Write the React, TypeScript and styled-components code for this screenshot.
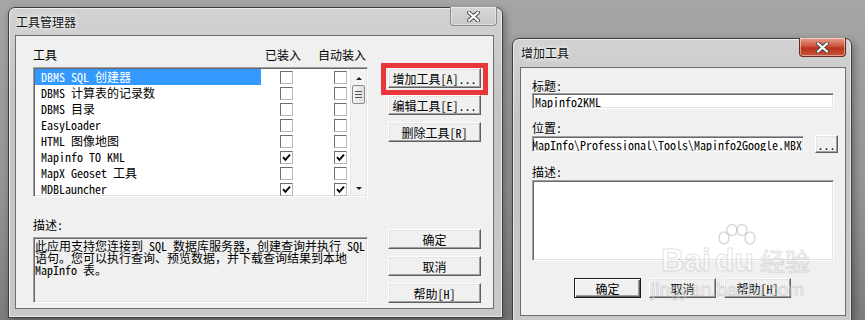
import React from "react";
import styled, { createGlobalStyle } from "styled-components";

const UI_FONT = `"Noto Sans Mono CJK SC", "Liberation Mono", "Noto Sans CJK SC", monospace`;

const GlobalStyle = createGlobalStyle`
  html, body {
    margin: 0;
    padding: 0;
  }
  body {
    width: 865px;
    height: 320px;
    overflow: hidden;
    background: linear-gradient(180deg, #a6a6a6 0%, #959595 60%, #7d7d7d 100%);
    font-family: ${UI_FONT};
    font-size: 12px;
    color: #000;
  }
`;

const Desktop = styled.div`
  position: relative;
  display: flex;
  align-items: flex-start;
  width: 865px;
  height: 320px;
  padding: 7px 0 0 8px;
  box-sizing: border-box;
  overflow: hidden;
`;

const Window = styled.div<{ $w: number; $h: number; $top?: number; $left?: number }>`
  display: flex;
  flex-direction: column;
  flex: none;
  width: ${({ $w }) => $w}px;
  height: ${({ $h }) => $h}px;
  margin-top: ${({ $top }) => $top || 0}px;
  margin-left: ${({ $left }) => $left || 0}px;
  box-sizing: border-box;
  border: 1px solid #3e3e3e;
  border-radius: 7px 7px 0 0;
  background: linear-gradient(180deg, #d2d2d2 0%, #c4c4c4 30%, #c8c8c8 100%);
  box-shadow: inset 0 0 0 1px rgba(255, 255, 255, 0.6), 2px 3px 9px rgba(0, 0, 0, 0.35);
`;

const TitleBar = styled.div<{ $h: number; $pl: number; $pr: number }>`
  display: flex;
  justify-content: space-between;
  align-items: flex-start;
  height: ${({ $h }) => $h}px;
  padding: 0 ${({ $pr }) => $pr}px 0 ${({ $pl }) => $pl}px;
  flex: none;
`;

const Title = styled.span`
  align-self: center;
  font-family: "Noto Sans CJK SC", sans-serif;
  font-size: 12px;
  line-height: 14px;
  color: #111;
  text-shadow: 0 0 6px #fff, 0 0 3px #fff;
`;

const CloseButton = styled.div<{ $active?: boolean }>`
  display: flex;
  align-items: center;
  justify-content: center;
  width: 47px;
  height: 19px;
  margin-top: -1px;
  box-sizing: border-box;
  border: 1px solid ${({ $active }) => ($active ? "#6b2a1f" : "#8a8a8a")};
  border-top: none;
  border-radius: 0 0 4px 4px;
  background: ${({ $active }) =>
    $active
      ? "linear-gradient(180deg, #e6a08f 0%, #d0553c 45%, #b8321c 55%, #c9543a 100%)"
      : "linear-gradient(180deg, #d6d6d6 0%, #c8c8c8 100%)"};
  box-shadow: inset 0 0 0 1px rgba(255, 255, 255, 0.45);
`;

const Client = styled.div<{ $mx: [number, number]; $mb: number }>`
  flex: 1;
  margin: 0 ${({ $mx }) => $mx[1]}px ${({ $mb }) => $mb}px ${({ $mx }) => $mx[0]}px;
  border: 1px solid #6d6d6d;
  background: #f0f0f0;
  box-sizing: border-box;
  overflow: hidden;
`;

/* ---------- manager dialog ---------- */

const ManagerGrid = styled.div`
  display: grid;
  grid-template-columns: 335px 93px;
  column-gap: 20px;
  padding: 12px 0 0 17px;
`;

const Column = styled.div<{ $mt?: number; $pt?: number; $gap?: number }>`
  display: flex;
  flex-direction: column;
  gap: ${({ $gap }) => $gap || 0}px;
  margin-top: ${({ $mt }) => $mt || 0}px;
  padding-top: ${({ $pt }) => $pt || 0}px;
`;

const Label = styled.div<{ $w?: number }>`
  line-height: 14px;
  height: 14px;
  white-space: nowrap;
  ${({ $w }) => ($w ? `width: ${$w}px; flex: none;` : "")}
`;

const HeaderRow = styled.div`
  display: flex;
`;

const Sunken = styled.div<{ $h: number; $bg?: string }>`
  position: relative;
  height: ${({ $h }) => $h}px;
  box-sizing: border-box;
  border: 1px solid;
  border-color: #a0a0a0 #fff #fff #a0a0a0;
  box-shadow: inset 1px 1px 0 #696969, inset -1px -1px 0 #e3e3e3;
  background: ${({ $bg }) => $bg || "#fff"};
  overflow: hidden;
`;

const ListBox = styled(Sunken)`
  display: flex;
  margin-top: 5px;
  padding: 1px;
`;

const Rows = styled.div`
  flex: 1;
  display: flex;
  flex-direction: column;
`;

const Row = styled.div`
  display: flex;
  align-items: center;
  height: 16px;
`;

const NameCell = styled.div<{ $selected?: boolean }>`
  width: 226px;
  height: 16px;
  line-height: 16px;
  padding-left: 6px;
  box-sizing: border-box;
  white-space: nowrap;
  background: ${({ $selected }) => ($selected ? "#3399ff" : "transparent")};
  color: ${({ $selected }) => ($selected ? "#fff" : "#000")};
`;

const CheckBox = styled.div<{ $ml: number }>`
  width: 13px;
  height: 13px;
  margin-left: ${({ $ml }) => $ml}px;
  box-sizing: border-box;
  border: 1px solid;
  border-color: #6e6e6e #b9b9b9 #b9b9b9 #6e6e6e;
  background: #fff;
  display: flex;
  align-items: center;
  justify-content: center;
`;

const ScrollBar = styled.div`
  position: relative;
  width: 15px;
  display: flex;
  flex-direction: column;
  align-items: center;
  background: #f3f3f3;
  border-left: 1px solid #e6e6e6;
`;

const ScrollArrow = styled.div<{ $down?: boolean }>`
  width: 0;
  height: 0;
  margin-top: ${({ $down }) => ($down ? "auto" : "8px")};
  margin-bottom: ${({ $down }) => ($down ? "5px" : "0")};
  border-left: 3.5px solid transparent;
  border-right: 3.5px solid transparent;
  ${({ $down }) => ($down ? "border-top: 3px solid #222;" : "border-bottom: 3px solid #222;")}
`;

const ScrollThumb = styled.div`
  width: 13px;
  height: 19px;
  margin-top: 5px;
  box-sizing: border-box;
  border: 1px solid #8c8c8c;
  border-radius: 2px;
  background: linear-gradient(90deg, #f6f6f6, #dedede);
  display: flex;
  flex-direction: column;
  align-items: center;
  justify-content: center;
  gap: 2px;
`;

const Grip = styled.span`
  width: 7px;
  height: 1px;
  background: #555;
`;

const DescBox = styled(Sunken)`
  margin-top: 5px;
  padding: 2px 1px;
  line-height: 12px;
  white-space: pre;
`;

const Button = styled.div<{ $w: number; $h?: number; $default?: boolean }>`
  display: flex;
  align-items: center;
  justify-content: center;
  width: ${({ $w }) => $w}px;
  height: ${({ $h }) => $h || 20}px;
  box-sizing: border-box;
  white-space: nowrap;
  background: #f0f0f0;
  border: 1px solid;
  border-color: ${({ $default }) => ($default ? "#1a1a1a" : "#fff #5e5e5e #5e5e5e #fff")};
  box-shadow: ${({ $default }) =>
    $default
      ? "inset 1px 1px 0 #fff, inset -1px -1px 0 #5e5e5e, inset -2px -2px 0 #a0a0a0"
      : "inset -1px -1px 0 #a0a0a0, inset 1px 1px 0 #e3e3e3"};
`;

const Highlight = styled.div`
  position: relative;

  &::after {
    content: "";
    position: absolute;
    left: -7px;
    right: -7px;
    top: -5px;
    bottom: -7px;
    border: 5px solid #e8363a;
    pointer-events: none;
  }
`;

/* ---------- add tool dialog ---------- */

const Form = styled.div`
  display: flex;
  flex-direction: column;
  padding: 11px 0 0 11px;
`;

const Field = styled(Sunken)`
  display: flex;
  align-items: center;
  justify-content: flex-end;
  padding: 0 1px 0 2px;
  white-space: nowrap;
`;

const FieldRow = styled.div`
  display: flex;
  align-items: center;
  gap: 11px;
`;

const Gap = styled.div<{ $h: number }>`
  height: ${({ $h }) => $h}px;
  flex: none;
`;

const ButtonRow = styled.div`
  display: flex;
  gap: 8px;
  padding-left: 42px;
`;

/* ---------- watermark over the screenshot ---------- */

const Watermark = styled.div`
  position: absolute;
  left: 661px;
  top: 244px;
  white-space: nowrap;
  font-family: "Liberation Sans", sans-serif;
  color: rgba(255, 255, 255, 0.4);
  -webkit-text-stroke: 1px rgba(150, 150, 150, 0.3);
  pointer-events: none;
`;

const MarkLine = styled.div`
  display: flex;
  align-items: baseline;
  font-size: 32px;
  font-weight: bold;
  line-height: 32px;
`;

const MarkDu = styled.span`
  margin-left: 4px;
`;

const MarkCn = styled.span`
  font-family: "Noto Sans CJK SC", sans-serif;
  font-size: 25px;
  font-weight: normal;
  margin-left: 6px;
`;

const MarkUrl = styled.div`
  font-size: 19px;
  line-height: 20px;
  margin: 4px 0 0 -10px;
`;

const PawMark = styled.svg`
  position: absolute;
  left: 56px;
  top: -20px;
`;

const tools = [
  { name: "DBMS SQL 创建器", loaded: false, auto: false },
  { name: "DBMS 计算表的记录数", loaded: false, auto: false },
  { name: "DBMS 目录", loaded: false, auto: false },
  { name: "EasyLoader", loaded: false, auto: false },
  { name: "HTML 图像地图", loaded: false, auto: false },
  { name: "Mapinfo TO KML", loaded: true, auto: true },
  { name: "MapX Geoset 工具", loaded: false, auto: false },
  { name: "MDBLauncher", loaded: true, auto: true },
];

const Check = ({ on, ml }: { on: boolean; ml: number }) => (
  <CheckBox $ml={ml}>
    {on && (
      <svg width="9" height="9" viewBox="0 0 9 9">
        <path d="M1 4.2 L3.4 6.8 L8 1.6" fill="none" stroke="#000" strokeWidth="1.9" />
      </svg>
    )}
  </CheckBox>
);

const CloseGlyph = () => (
  <svg width="13" height="11" viewBox="0 0 13 11">
    <path
      d="M2 1.5 L11 9.5 M11 1.5 L2 9.5"
      stroke="#4a4a4a"
      strokeWidth="4"
      strokeLinecap="round"
      fill="none"
    />
    <path
      d="M2 1.5 L11 9.5 M11 1.5 L2 9.5"
      stroke="#fff"
      strokeWidth="2.2"
      strokeLinecap="round"
      fill="none"
    />
  </svg>
);

const Paw = () => (
  <PawMark width="40" height="26" viewBox="0 0 40 26">
    <g fill="rgba(255,255,255,0.4)" stroke="rgba(150,150,150,0.35)" strokeWidth="1.5">
      <ellipse cx="7" cy="14" rx="5" ry="6" />
      <ellipse cx="15" cy="6" rx="5" ry="5.5" />
      <ellipse cx="25" cy="6" rx="5" ry="5.5" />
      <ellipse cx="33" cy="14" rx="5" ry="6" />
    </g>
  </PawMark>
);

export default function App() {
  return (
    <>
      <GlobalStyle />
      <Desktop>
        <Window $w={495} $h={311}>
          <TitleBar $h={27} $pl={7} $pr={5}>
            <Title>工具管理器</Title>
            <CloseButton>
              <CloseGlyph />
            </CloseButton>
          </TitleBar>
          <Client $mx={[6, 8]} $mb={8}>
            <ManagerGrid>
              <Column>
                <HeaderRow>
                  <Label $w={232}>工具</Label>
                  <Label $w={53}>已装入</Label>
                  <Label>自动装入</Label>
                </HeaderRow>
                <ListBox $h={130}>
                  <Rows>
                    {tools.map((t, i) => (
                      <Row key={t.name}>
                        <NameCell $selected={i === 0}>{t.name}</NameCell>
                        <Check on={t.loaded} ml={19} />
                        <Check on={t.auto} ml={41} />
                      </Row>
                    ))}
                  </Rows>
                  <ScrollBar>
                    <ScrollArrow />
                    <ScrollThumb>
                      <Grip />
                      <Grip />
                      <Grip />
                    </ScrollThumb>
                    <ScrollArrow $down />
                  </ScrollBar>
                </ListBox>
              </Column>
              <Column $pt={20} $gap={7}>
                <Highlight>
                  <Button $w={93}>增加工具[A]...</Button>
                </Highlight>
                <Button $w={93}>编辑工具[E]...</Button>
                <Button $w={93}>删除工具[R]</Button>
              </Column>
              <Column $mt={21}>
                <Label>描述:</Label>
                <DescBox $h={66} $bg="#f0f0f0">
                  {"此应用支持您连接到 SQL 数据库服务器，创建查询并执行 SQL\n语句。您可以执行查询、预览数据，并下载查询结果到本地\nMapInfo 表。"}
                </DescBox>
              </Column>
              <Column $mt={21} $pt={11} $gap={7}>
                <Button $w={93}>确定</Button>
                <Button $w={93}>取消</Button>
                <Button $w={93}>帮助[H]</Button>
              </Column>
            </ManagerGrid>
          </Client>
        </Window>

        <Window $w={340} $h={284} $top={31} $left={9}>
          <TitleBar $h={28} $pl={8} $pr={5}>
            <Title>增加工具</Title>
            <CloseButton $active>
              <CloseGlyph />
            </CloseButton>
          </TitleBar>
          <Client $mx={[7, 5]} $mb={5}>
            <Form>
              <Label>标题:</Label>
              <Field $h={16} style={{ width: 302, justifyContent: "flex-start" }}>
                Mapinfo2KML
              </Field>
              <Gap $h={12} />
              <Label>位置:</Label>
              <FieldRow>
                <Field $h={16} style={{ width: 272 }}>
                  <span>C:\Program Files\MapInfo\Professional\Tools\Mapinfo2Google.MBX</span>
                </Field>
                <Button $w={23} $h={18}>...</Button>
              </FieldRow>
              <Gap $h={12} />
              <Label>描述:</Label>
              <Gap $h={1} />
              <Sunken $h={81} style={{ width: 302 }} />
              <Gap $h={17} />
              <ButtonRow>
                <Button $w={67} $default>确定</Button>
                <Button $w={67}>取消</Button>
                <Button $w={67}>帮助[H]</Button>
              </ButtonRow>
            </Form>
          </Client>
        </Window>

        <Watermark>
          <Paw />
          <MarkLine>
            Bai
            <MarkDu>du</MarkDu>
            <MarkCn>经验</MarkCn>
          </MarkLine>
          <MarkUrl>jingyan.baidu.com</MarkUrl>
        </Watermark>
      </Desktop>
    </>
  );
}
